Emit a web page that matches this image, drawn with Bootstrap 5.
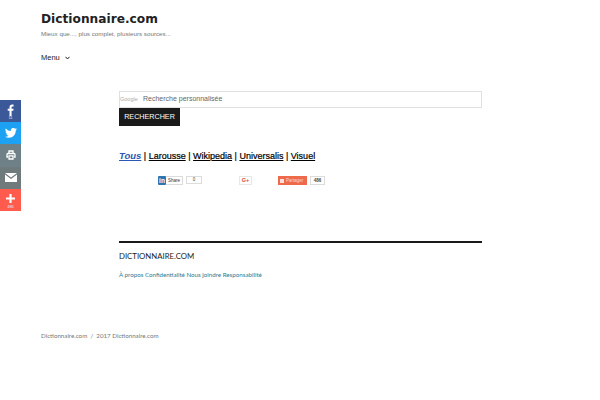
<!DOCTYPE html>
<html lang="fr">
<head>
    <meta charset="UTF-8">
    <meta name="viewport" content="width=device-width, initial-scale=1.0">
    <title>Dictionnaire.com</title>
    <link rel="stylesheet" href="https://cdn.jsdelivr.net/npm/bootstrap@5.3.0/dist/css/bootstrap.min.css">
    <style>
        body {
            background-color: #fff;
            color: #222;
            font-family: "Liberation Sans", sans-serif;
            height: 400px;
            overflow: hidden;
        }

        .page-head {
            padding: 12px 41px 0;
        }

        .site-title {
            font-family: "DejaVu Sans", sans-serif;
            font-weight: 700;
            font-size: 12.2px;
            line-height: 14px;
            color: #222;
            margin: 0;
        }

        .site-desc {
            font-size: 6.25px;
            line-height: 9px;
            margin-top: 3px;
            color: #767676;
        }

        .menu-toggle {
            font-size: 7.5px;
            line-height: 12px;
            margin-top: 14px;
            gap: 5px;
            color: #222;
        }

        .main-col {
            width: 363px;
            margin: 27px 0 0 119px;
        }

        .search-box {
            height: 17px;
            border: 1px solid #e0e0e0;
        }

        .search-google {
            font-size: 5.5px;
            color: #aaa;
            width: 23px;
        }

        .search-hint {
            font-size: 7px;
            color: #666;
        }

        .search-btn {
            background: #1a1a1a;
            color: #fff;
            font-size: 7.2px;
            line-height: 18px;
            height: 18px;
            width: 61px;
            text-align: center;
            border-radius: 0;
            border: 0;
            padding: 0;
            display: block;
        }

        .source-links {
            font-size: 9px;
            line-height: 12px;
            margin-top: 24px;
            color: #000;
            -webkit-text-stroke: .2px #000;
        }

        .source-links a {
            color: #000;
        }

        .source-links a.on {
            color: #2b58b5;
            -webkit-text-stroke: 0;
            font-style: italic;
            font-weight: 700;
            font-size: 9.5px;
        }

        .share-row {
            height: 9px;
            margin-top: 14px;
        }

        .share-in {
            margin-left: 39px;
            width: 44px;
        }

        .in-logo {
            width: 8px;
            height: 9px;
            background: #2f76b1;
            color: #fff;
            font-size: 6.5px;
            font-weight: 700;
            line-height: 9px;
            text-align: center;
            border-radius: 1px;
        }

        .in-label {
            width: 17px;
            height: 9px;
            font-size: 4.5px;
            line-height: 7px;
            text-align: center;
            color: #333;
            border: 1px solid #dcdcdc;
            border-left: 0;
        }

        .share-count {
            height: 8px;
            font-size: 4.5px;
            line-height: 6px;
            text-align: center;
            color: #444;
            border: 1px solid #dcdcdc;
        }

        .count-in {
            margin-left: 3px;
        }

        .count-orange {
            width: 15px;
            height: 9px;
            line-height: 7px;
            font-weight: 700;
            margin-left: 3px;
        }

        .share-gplus {
            width: 13px;
            height: 9px;
            margin-left: 37px;
            font-size: 5.5px;
            line-height: 7px;
            font-weight: 700;
            text-align: center;
            color: #dd4b39;
            border: 1px solid #e8e8e8;
        }

        .share-orange {
            width: 29px;
            height: 9px;
            margin-left: 26px;
            background: #ee6a4d;
            color: #fbd9d0;
            font-size: 4.5px;
            line-height: 9px;
            gap: 2px;
            padding-left: 2px;
        }

        .share-orange i {
            display: block;
            width: 4px;
            height: 4px;
            background: #fbe0d8;
        }

        .foot-rule {
            border-top: 2px solid #1a1a1a;
            margin-top: 56px;
        }

        .foot-title {
            font-family: "Lato", sans-serif;
            font-size: 7.8px;
            line-height: 10px;
            margin-top: 8px;
            color: #222;
        }

        .foot-links {
            font-family: "Lato", sans-serif;
            font-size: 6.2px;
            line-height: 9px;
            margin-top: 9px;
            color: #2a7a94;
        }

        .legal {
            font-family: "Lato", sans-serif;
            font-size: 6.2px;
            line-height: 9px;
            color: #767676;
            margin: 52px 0 0 41px;
        }

        .share-rail {
            position: fixed;
            left: 0;
            top: 100px;
            width: 21px;
        }

        .rail-item {
            height: 22.2px;
            color: #fff;
        }

        .rail-stack {
            padding-top: 5px;
            gap: 2px;
        }

        .rail-num {
            font-size: 4px;
            line-height: 4px;
            color: #dfe6f5;
        }

        .rail-fb { background: #3b5998; }
        .rail-tw { background: #1da1f2; }
        .rail-pr { background: #6f8186; }
        .rail-ml { background: #6f7a7c; }
        .rail-pl { background: #ff5c4d; }
    </style>
</head>
<body>
    <!-- Share rail -->
    <div class="share-rail d-flex flex-column">
        <div class="rail-item rail-fb d-flex flex-column align-items-center">
            <svg class="mt-1" width="7" height="12" viewBox="0 0 7 12"><path fill="#fff" d="M4.600 12V6.800h1.700l.3-2H4.600V3.500c0-.6.2-1 1-1h1V.7C6.400.6 5.800.5 5.100.5 3.600.5 2.500 1.500 2.500 3.300v1.500H.7v2h1.800V12z"/></svg>
            <span class="rail-num">11</span>
        </div>
        <div class="rail-item rail-tw d-flex align-items-center justify-content-center">
            <svg width="12" height="10" viewBox="0 0 24 20"><path fill="#fff" d="M24 2.400a9.800 9.800 0 0 1-2.800.8A5 5 0 0 0 23.300.500a9.800 9.800 0 0 1-3.100 1.200 4.900 4.900 0 0 0-8.400 4.500A14 14 0 0 1 1.700.900a4.900 4.900 0 0 0 1.500 6.600 4.900 4.900 0 0 1-2.200-.6c0 2.400 1.700 4.400 3.900 4.900a4.900 4.900 0 0 1-2.200.1 4.900 4.900 0 0 0 4.600 3.400A9.900 9.900 0 0 1 0 17.300 14 14 0 0 0 7.500 19.500c9.100 0 14.300-7.700 14-14.600A10 10 0 0 0 24 2.400z"/></svg>
        </div>
        <div class="rail-item rail-pr d-flex align-items-center justify-content-center">
            <svg width="10" height="10" viewBox="0 0 10 10"><path fill="none" stroke="#fff" stroke-width="1.300" d="M3 3V1h4v2M2 7H1V4.500Q1 3.500 2 3.500h6q1 0 1 1V7H8M3 5.800h4V9H3z"/></svg>
        </div>
        <div class="rail-item rail-ml d-flex align-items-center justify-content-center">
            <svg width="12" height="9" viewBox="0 0 12 9"><path fill="#fff" d="M0 0h12L6 4.500zM0 1.500l6 4.500 6-4.500V9H0z"/></svg>
        </div>
        <div class="rail-item rail-pl rail-stack d-flex flex-column align-items-center">
            <svg width="9" height="9" viewBox="0 0 9 9"><path fill="#fff" d="M3.400 0h2.200v3.400H9v2.200H5.600V9H3.400V5.600H0V3.400h3.400z"/></svg>
            <span class="rail-num">486</span>
        </div>
    </div>

    <header class="page-head">
        <h1 class="site-title">Dictionnaire.com</h1>
        <div class="site-desc">Mieux que..., plus complet, plusieurs sources...</div>
        <div class="menu-toggle d-flex align-items-center">
            Menu
            <svg width="5" height="4" viewBox="0 0 5 4"><path fill="none" stroke="#222" d="M.5.800 2.500 3 4.500.8"/></svg>
        </div>
    </header>

    <main class="main-col">
        <div class="search-box d-flex align-items-center">
            <span class="search-google">Google</span>
            <span class="search-hint">Recherche personnalisée</span>
        </div>
        <button class="search-btn" type="button">RECHERCHER</button>

        <div class="source-links">
            <a class="on" href="#">Tous</a> | <a href="#">Larousse</a> | <a href="#">Wikipedia</a> | <a href="#">Universalis</a> | <a href="#">Visuel</a>
        </div>

        <div class="share-row d-flex">
            <div class="share-in d-flex">
                <div class="in-logo">in</div>
                <div class="in-label">Share</div>
                <div class="share-count count-in flex-grow-1">0</div>
            </div>
            <div class="share-gplus">G+</div>
            <div class="share-orange d-flex align-items-center"><i></i>Partager</div>
            <div class="share-count count-orange">486</div>
        </div>

        <div class="foot-rule"></div>
        <div class="foot-title">DICTIONNAIRE.COM</div>
        <div class="foot-links">À propos Confidentialité Nous joindre Responsabilité</div>
    </main>

    <footer class="legal">Dictionnaire.com &nbsp;/&nbsp; 2017 Dictionnaire.com</footer>
    <script src="https://cdn.jsdelivr.net/npm/bootstrap@5.3.0/dist/js/bootstrap.bundle.min.js"></script>
</body>
</html>
